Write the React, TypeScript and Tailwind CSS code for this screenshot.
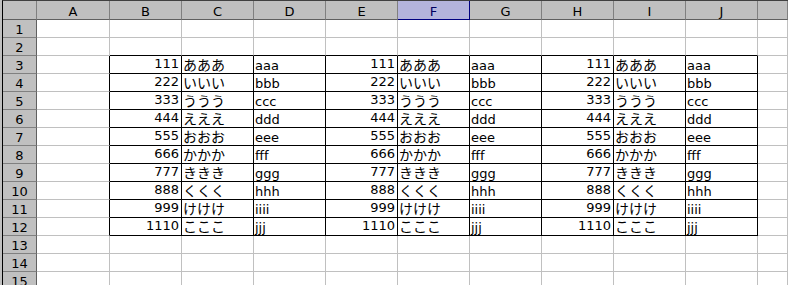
import React from "react";

const COLS = ["A", "B", "C", "D", "E", "F", "G", "H", "I", "J", ""];
const ROWS = Array.from({ length: 15 }, (_, i) => i + 1);

const NUMS = ["111", "222", "333", "444", "555", "666", "777", "888", "999", "1110"];
const KANA = ["あああ", "いいい", "ううう", "えええ", "おおお", "かかか", "ききき", "くくく", "けけけ", "こここ"];
const LATIN = ["aaa", "bbb", "ccc", "ddd", "eee", "fff", "ggg", "hhh", "iiii", "jjj"];

const mono = { fontFamily: '"DejaVu Sans", "Noto Sans CJK JP", sans-serif' };

function HeaderCell({ label, active }: { label: string; active?: boolean }) {
  return (
    <div
      className={
        active
          ? "h-[19px] border-r border-b border-r-[#000080] border-b-[#000080] bg-[#b4b4dc] text-[#000060] text-[13px] leading-[13px] pt-[4px] text-center"
          : "h-[19px] border-r border-b border-r-[#808080] border-b-[#606060] bg-[#c0c0c0] text-black text-[13px] leading-[13px] pt-[4px] text-center"
      }
    >
      {label}
    </div>
  );
}

function Cell({ row, col }: { row: number; col: number }) {
  const inBox = row >= 3 && row <= 12;
  const blackBottom = col >= 1 && col <= 9 && row >= 2 && row <= 12;
  const blackRight = inBox && col >= 0 && col <= 9;
  const cls = [
    "h-[18px] border-r border-b bg-white overflow-hidden whitespace-nowrap",
    blackBottom ? "border-b-black" : "border-b-[#c0c0c0]",
    blackRight ? "border-r-black" : "border-r-[#c0c0c0]",
  ].join(" ");

  let content: React.ReactNode = null;
  if (inBox && col >= 1 && col <= 9) {
    const i = row - 3;
    const kind = (col - 1) % 3;
    if (kind === 0) {
      content = <div className="text-right pr-[2px] text-[13px] leading-[15px]">{NUMS[i]}</div>;
    } else if (kind === 1) {
      content = (
        <div
          className="pl-[1px] text-[14px] leading-[16px]"
          style={{ fontFamily: '"Noto Sans CJK JP", sans-serif' }}
        >
          {KANA[i]}
        </div>
      );
    } else {
      content = <div className="pl-[1px] text-[13px] leading-[15px] pt-[2px]">{LATIN[i]}</div>;
    }
  }
  return <div className={cls}>{content}</div>;
}

export default function App() {
  return (
    <div className="w-[788px] h-[285px] overflow-hidden bg-[#c0c0c0] pl-[2px] text-black" style={mono}>
      <div className="border-l border-t border-l-black border-t-[#404040] grid grid-cols-[34px_73px_repeat(9,72px)_1fr]">
        <div className="h-[19px] border-r border-b border-r-[#808080] border-b-[#606060] bg-[#c0c0c0]" />
        {COLS.map((c) => (
          <HeaderCell key={c || "K"} label={c} active={c === "F"} />
        ))}
        {ROWS.map((r) => (
          <React.Fragment key={r}>
            <div className="h-[18px] border-r border-b border-r-[#606060] border-b-[#808080] bg-[#c0c0c0] text-center text-[13px] leading-[13px] pt-[3px]">
              {r}
            </div>
            {COLS.map((_, ci) => (
              <Cell key={ci} row={r} col={ci} />
            ))}
          </React.Fragment>
        ))}
      </div>
    </div>
  );
}
